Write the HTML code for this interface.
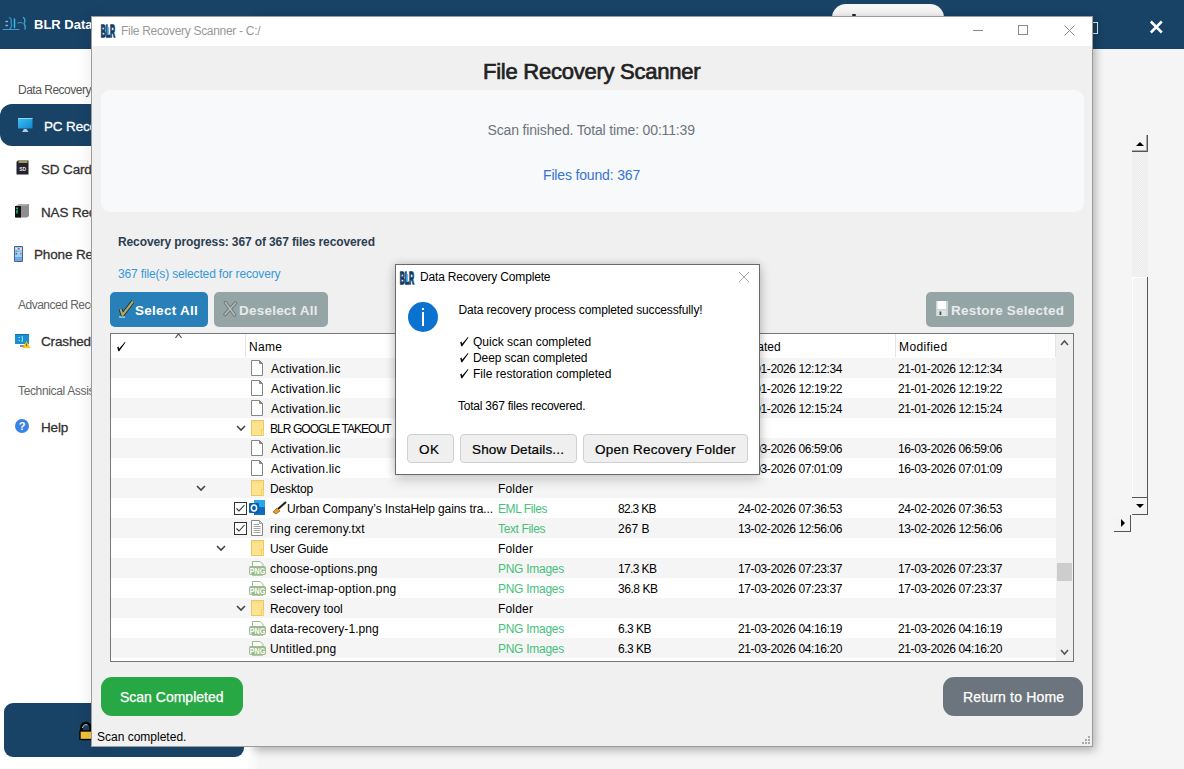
<!DOCTYPE html>
<html><head><meta charset="utf-8">
<style>
html,body{margin:0;padding:0;width:1184px;height:769px;overflow:hidden;background:#f5f5f5;font-family:"Liberation Sans",sans-serif;}
.a{position:absolute;box-sizing:border-box;}
.t{position:absolute;white-space:pre;line-height:normal;font-family:"Liberation Sans",sans-serif;}
</style></head><body>
<div class=a style='left:0;top:49px;width:252px;height:720px;background:#fff'></div>
<div class=a style='left:246px;top:49px;width:14px;height:720px;background:linear-gradient(90deg,#fff,#f5f5f5)'></div>
<div class=a style='left:0;top:0;width:1184px;height:49px;background:#184266'></div>
<div class=a style='left:832px;top:4px;width:112px;height:30px;background:linear-gradient(#f6f6f6,#ececec);border-radius:14px'></div>
<div class=a style='left:852px;top:14px;width:4px;height:2px;background:#222;border-radius:1px'></div>
<svg class=a style='left:1px;top:15px' width='26' height='16' viewBox='0 0 26 16'><g fill='none' stroke-linecap='round'><path d='M5 6.5 H6.5 M5 10.5 H6.5' stroke='#8fb0cc' stroke-width='1.4'/><path d='M8.5 2.5 Q11 4 10 7.5 Q11.5 11 9 14' stroke='#2e8fc4' stroke-width='1.4'/><path d='M13.5 4 V12.5' stroke='#44b4e4' stroke-width='1.5'/><path d='M17 8 Q19 7 21 8' stroke='#4a9ac0' stroke-width='1.2'/><path d='M22.5 2.5 Q25 5 23 8.5 Q25 11 24 14' stroke='#36a7c8' stroke-width='1.4'/><path d='M2 14.5 H18' stroke='#3f9fd0' stroke-width='1'/></g></svg>
<div class='t ' style='left:34px;top:17px;font-size:13px;color:#fff;font-weight:bold;'>BLR Data Recovery</div>
<div class=a style='left:1092px;top:22px;width:6px;height:12px;border:1.5px solid #e4ebf2;border-left:none'></div>
<svg class=a style='left:1149px;top:20px' width='15' height='14' viewBox='0 0 15 14'><path d='M1.8 1.5 L12.8 12.5 M12.8 1.5 L1.8 12.5' stroke='#fff' stroke-width='2.5'/></svg>
<div class='t ' style='left:18px;top:83px;font-size:12px;color:#555;letter-spacing:-0.490px;'>Data Recovery</div>
<div class=a style='left:0;top:104px;width:120px;height:42px;background:#184266;border-radius:0 0 0 0;border-top-left-radius:12px;border-bottom-left-radius:12px'></div>
<svg class=a style='left:17px;top:117px' width='17' height='17' viewBox='0 0 17 17'><defs><linearGradient id='mg' x1='0' y1='0' x2='1' y2='1'><stop offset='0' stop-color='#3cc4f4'/><stop offset='1' stop-color='#1186d0'/></linearGradient></defs><rect x='1' y='1' width='14.5' height='10.5' fill='url(#mg)'/><rect x='1' y='1' width='14.5' height='1' fill='#8fd3f3'/><path d='M5 15 L7 12 H9.5 L11.5 15 Z' fill='#b8c6de'/></svg>
<div class='t ' style='left:44px;top:119px;font-size:13.5px;color:#fff;letter-spacing:-0.15px;-webkit-text-stroke:0.3px #fff'>PC Recovery</div>
<svg class=a style='left:16px;top:160px' width='13' height='15' viewBox='0 0 13 15'><path d='M2 0.5 H12.5 V14.5 H0.5 V2 Z' fill='#24232e'/><rect x='2.5' y='0.5' width='9' height='2.5' fill='#9e9a62'/><text x='3.2' y='10.5' font-size='5' font-family='Liberation Sans' font-weight='bold' fill='#e8e8f0'>SD</text></svg>
<div class='t ' style='left:41px;top:162px;font-size:13.5px;color:#333;letter-spacing:-0.15px;-webkit-text-stroke:0.3px #333'>SD Card Recovery</div>
<svg class=a style='left:15px;top:204px' width='14' height='14' viewBox='0 0 14 14'><path d='M1 2 L4 0 H14 V12 L12 13.5 H1 Z' fill='#8d8d92'/><path d='M1 2 L4 0 H14 L12 1.5 Z' fill='#b0b0b4'/><rect x='0' y='2' width='6' height='11.5' fill='#101010'/><rect x='1' y='3.5' width='2' height='1.8' fill='#2fa070'/><rect x='1' y='6' width='2' height='3.5' fill='#238a5c'/></svg>
<div class='t ' style='left:41px;top:205px;font-size:13.5px;color:#333;letter-spacing:-0.15px;-webkit-text-stroke:0.3px #333'>NAS Recovery</div>
<svg class=a style='left:14px;top:246px' width='9' height='16' viewBox='0 0 9 16'><rect x='0' y='0' width='9' height='16' rx='1' fill='#43648e'/><rect x='1' y='1' width='7' height='14' fill='#a9c9ec'/><rect x='1.5' y='2' width='1.8' height='1.5' fill='#dfe9f7'/><rect x='3.8' y='2' width='1.8' height='1.5' fill='#c05a80'/><rect x='6' y='2' width='1.5' height='1.5' fill='#e6eefa'/><rect x='1.5' y='4.5' width='1.8' height='1.5' fill='#45b3a4'/><rect x='3.8' y='4.5' width='1.8' height='1.5' fill='#6fcde0'/><rect x='1.5' y='7' width='1.8' height='1.5' fill='#2a7f9f'/><rect x='3.8' y='7' width='1.8' height='1.5' fill='#9fe0f0'/><rect x='6' y='7' width='1.5' height='1.5' fill='#a07aa8'/><rect x='1' y='11' width='7' height='4' fill='#6fa8e8'/></svg>
<div class='t ' style='left:34px;top:247px;font-size:13.5px;color:#333;letter-spacing:-0.15px;-webkit-text-stroke:0.3px #333'>Phone Recovery</div>
<div class='t ' style='left:18px;top:298px;font-size:12px;color:#666;letter-spacing:-0.5px'>Advanced Recovery</div>
<svg class=a style='left:14px;top:333px' width='17' height='16' viewBox='0 0 17 16'><rect x='1' y='1' width='14' height='10' fill='#1b8fcf'/><rect x='1' y='1' width='14' height='0.8' fill='#1a6aa0'/><path d='M4.5 4.5 H6 M4.5 7.5 H6 M8 3 Q9 6 8 9' stroke='#7fe0ff' stroke-width='1.2' fill='none'/><rect x='6' y='12' width='4' height='2' fill='#8a8fa0'/><path d='M8.5 15 L12.5 8 L16.5 15 Z' fill='#f5c218'/><rect x='12' y='10.5' width='1' height='2.5' fill='#7a6a10'/></svg>
<div class='t ' style='left:41px;top:334px;font-size:13.5px;color:#333;letter-spacing:-0.15px;-webkit-text-stroke:0.3px #333'>Crashed Drive</div>
<div class='t ' style='left:18px;top:384px;font-size:12px;color:#666;letter-spacing:-0.35px'>Technical Assistance</div>
<div class=a style='left:15px;top:419px;width:14px;height:14px;border-radius:50%;background:#3b82e6;color:#fff;font:bold 11px "Liberation Sans";text-align:center;line-height:14px'>?</div>
<div class='t ' style='left:41px;top:420px;font-size:13.5px;color:#333;letter-spacing:-0.15px;-webkit-text-stroke:0.3px #333'>Help</div>
<div class=a style='left:4px;top:703px;width:240px;height:54px;background:#184266;border-radius:9px'></div>
<svg class=a style='left:79px;top:721px' width='14' height='20' viewBox='0 0 14 20'><path d='M2.5 10 V6.5 a4.5 4.5 0 0 1 9 0 V10' stroke='#000' stroke-width='2.6' fill='none'/><path d='M3.5 7 a3.5 3.5 0 0 1 5 -3' stroke='#ddd' stroke-width='0.9' fill='none'/><rect x='1' y='10' width='12.5' height='8.5' fill='#f3c23c' stroke='#000' stroke-width='1.3'/></svg>
<div class=a style='left:1132px;top:151px;width:16px;height:126px;background:repeating-conic-gradient(#f4f4f4 0 25%,#ececec 0 50%) 0 0/2px 2px'></div>
<div class=a style='left:1132px;top:135px;width:16px;height:17px;background:#f4f4f4;border-right:1px solid #555;border-bottom:1px solid #555;box-shadow:inset -1px -1px #aaa'></div>
<div class=a style='left:1136px;top:142px;width:0;height:0;border-left:4px solid transparent;border-right:4px solid transparent;border-bottom:4px solid #000'></div>
<div class=a style='left:1132px;top:277px;width:16px;height:220px;background:#f4f4f4;border-right:1px solid #555;box-shadow:inset 1px 1px #fff'></div>
<div class=a style='left:1132px;top:497px;width:16px;height:18px;background:#f4f4f4;border-top:1px solid #555;border-right:1px solid #555;border-bottom:1px solid #555'></div>
<div class=a style='left:1136px;top:504px;width:0;height:0;border-left:4px solid transparent;border-right:4px solid transparent;border-top:4px solid #000'></div>
<div class=a style='left:1114px;top:515px;width:17px;height:17px;background:#f4f4f4;border-right:1px solid #555;border-bottom:1px solid #555'></div>
<div class=a style='left:1121px;top:519px;width:0;height:0;border-top:4px solid transparent;border-bottom:4px solid transparent;border-left:4px solid #000'></div>
<div class=a style='left:252px;top:16px;width:841px;height:731px;box-shadow:2px 3px 9px rgba(0,0,0,0.3)'></div>
<div class=a style='left:91px;top:16px;width:20px;height:731px;box-shadow:-3px 0 14px rgba(0,0,0,0.07)'></div>
<div class=a style='left:91px;top:16px;width:1002px;height:731px;background:#f0f0f0;border:1px solid #9c9c9c'></div>
<div class=a style='left:92px;top:17px;width:1000px;height:29px;background:#fff'></div>
<svg class=a style='left:100px;top:23px' width='16' height='15' viewBox='0 0 16 15'><text x='0.7' y='14.2' font-family='Liberation Sans' font-size='17' font-weight='bold' fill='#0e3d6b' stroke='#0e3d6b' stroke-width='1.3' textLength='14.5' lengthAdjust='spacingAndGlyphs'>BLR</text><path d='M8.5 4 V12' stroke='#5fb8e8' stroke-width='1.2'/></svg>
<div class='t ' style='left:121px;top:24px;font-size:12px;color:#999;letter-spacing:-0.303px;'>File Recovery Scanner - C:/</div>
<div class=a style='left:973px;top:30px;width:10px;height:1px;background:#888'></div>
<div class=a style='left:1018px;top:25px;width:10px;height:10px;border:1px solid #888'></div>
<svg class=a style='left:1064px;top:25px' width='11' height='11' viewBox='0 0 11 11'><path d='M0.5 0.5 L10.5 10.5 M10.5 0.5 L0.5 10.5' stroke='#888' stroke-width='1'/></svg>
<div class='t ' style='left:483px;top:59px;font-size:22px;color:#222;letter-spacing:-0.252px;-webkit-text-stroke:0.7px #222;'>File Recovery Scanner</div>
<div class=a style='left:101px;top:90px;width:983px;height:122px;background:#f8f9fa;border-radius:9px'></div>
<div class='t ' style='left:487.5px;top:122px;font-size:14px;color:#6c757d;letter-spacing:-0.154px;'>Scan finished. Total time: 00:11:39</div>
<div class='t ' style='left:543px;top:167px;font-size:14px;color:#3574d4;letter-spacing:-0.162px;'>Files found: 367</div>
<div class='t ' style='left:118px;top:235px;font-size:12px;color:#2c3e50;font-weight:bold;letter-spacing:-0.117px;'>Recovery progress: 367 of 367 files recovered</div>
<div class='t ' style='left:118px;top:267px;font-size:12px;color:#3498db;letter-spacing:-0.153px;'>367 file(s) selected for recovery</div>
<div class=a style='left:110px;top:292px;width:98px;height:35px;background:#2980b9;border-radius:5px'></div>
<svg class=a style='left:118px;top:300px' width='16' height='18' viewBox='0 0 16 18'><path d='M2.5 9 L4.5 15 L15 1.5' stroke='#1a2a10' stroke-width='3.8' fill='none' stroke-linejoin='round'/><path d='M2.5 9 L4.5 15 L15 1.5' stroke='#a8ab78' stroke-width='2.2' fill='none' stroke-linejoin='round'/><path d='M1 17 H7' stroke='#e8f4ff' stroke-width='1'/></svg>
<div class='t ' style='left:135px;top:303px;font-size:13.5px;color:#fff;font-weight:bold;letter-spacing:0.280px;'>Select All</div>
<div class=a style='left:214px;top:292px;width:114px;height:35px;background:#95a5a6;border-radius:5px'></div>
<svg class=a style='left:223px;top:301px' width='15' height='16' viewBox='0 0 15 16'><path d='M2.5 1.5 L11.5 14 M12.5 2 L2 13.5' stroke='#6f7878' stroke-width='3.4' stroke-linecap='round' fill='none'/><path d='M2.5 1.5 L11.5 14 M12.5 2 L2 13.5' stroke='#b4bcbc' stroke-width='1.6' stroke-linecap='round' fill='none'/></svg>
<div class='t ' style='left:239px;top:303px;font-size:13.5px;color:#e6ebeb;font-weight:bold;letter-spacing:0.223px;'>Deselect All</div>
<div class=a style='left:926px;top:292px;width:148px;height:35px;background:#95a5a6;border-radius:5px'></div>
<svg class=a style='left:936px;top:301px' width='12' height='15' viewBox='0 0 12 15'><rect x='0' y='0' width='12' height='15' fill='#cfd4d4'/><rect x='1.5' y='0' width='8.5' height='8' fill='#fdfdfd'/><rect x='1.5' y='9.5' width='8.5' height='5.5' fill='#dfe3e3'/><rect x='3.5' y='10.5' width='1.8' height='3.5' fill='#4a4f4f'/></svg>
<div class='t ' style='left:951px;top:303px;font-size:13.5px;color:#e6ebeb;font-weight:bold;letter-spacing:0.229px;'>Restore Selected</div>
<div class=a style='left:110px;top:333px;width:964px;height:329px;background:#fff;border:1px solid #777'></div>
<div class=a style='left:111px;top:358px;width:945px;height:20px;background:#f5f5f5'></div>
<div class=a style='left:111px;top:398px;width:945px;height:20px;background:#f5f5f5'></div>
<div class=a style='left:111px;top:438px;width:945px;height:20px;background:#f5f5f5'></div>
<div class=a style='left:111px;top:478px;width:945px;height:20px;background:#f5f5f5'></div>
<div class=a style='left:111px;top:518px;width:945px;height:20px;background:#f5f5f5'></div>
<div class=a style='left:111px;top:558px;width:945px;height:20px;background:#f5f5f5'></div>
<div class=a style='left:111px;top:598px;width:945px;height:20px;background:#f5f5f5'></div>
<div class=a style='left:111px;top:638px;width:945px;height:20px;background:#f5f5f5'></div>
<div class=a style='left:245px;top:334px;width:1px;height:23px;background:#e5e5e5'></div>
<div class=a style='left:495px;top:334px;width:1px;height:23px;background:#e5e5e5'></div>
<div class=a style='left:615px;top:334px;width:1px;height:23px;background:#e5e5e5'></div>
<div class=a style='left:735px;top:334px;width:1px;height:23px;background:#e5e5e5'></div>
<div class=a style='left:895px;top:334px;width:1px;height:23px;background:#e5e5e5'></div>
<div class=a style='left:1055px;top:334px;width:1px;height:23px;background:#e5e5e5'></div>
<svg class=a style='left:116.5px;top:342px' width='9' height='10' viewBox='0 0 9 10'><path d='M0.2 5.2 L1.6 4.6 L2.1 6.7 L7.9 0.1 L8.5 0.6 L2.2 9.3 L1.3 9.3 Z' fill='#000'/></svg>
<svg class=a style='left:175px;top:333px' width='8' height='6' viewBox='0 0 8 6'><path d='M0.5 4.8 L3.5 1 L6.5 4.8' stroke='#555' stroke-width='1.2' fill='none'/></svg>
<div class='t ' style='left:249px;top:340px;font-size:12px;color:#000;letter-spacing:0.295px;'>Name</div>
<div class='t ' style='left:498px;top:340px;font-size:12px;color:#000;'>Type</div>
<div class='t ' style='left:618px;top:340px;font-size:12px;color:#000;'>Size</div>
<div class='t ' style='left:738px;top:340px;font-size:12px;color:#000;'>Created</div>
<div class='t ' style='left:899px;top:340px;font-size:12px;color:#000;letter-spacing:0.392px;'>Modified</div>
<div class=a style='left:1056px;top:334px;width:17px;height:327px;background:#f0f0f0'></div>
<svg class=a style='left:1060px;top:339px' width='9' height='7' viewBox='0 0 9 7'><path d='M1 6 L4.5 2 L8 6' stroke='#555' stroke-width='1.6' fill='none'/></svg>
<div class=a style='left:1057px;top:563px;width:15px;height:18px;background:#cdcdcd'></div>
<svg class=a style='left:1060px;top:649px' width='9' height='7' viewBox='0 0 9 7'><path d='M1 1 L4.5 5 L8 1' stroke='#555' stroke-width='1.6' fill='none'/></svg>
<svg class=a style='left:251px;top:360px' width='12' height='16' viewBox='0 0 12 16'><path d='M0.5 0.5 H8.5 L11.5 3.5 V15.5 H0.5 Z' fill='#fff' stroke='#858585' stroke-width='1'/><path d='M8.5 0.5 V3.5 H11.5 Z' fill='#999' stroke='#858585' stroke-width='1'/></svg>
<div class='t ' style='left:271px;top:362px;font-size:12px;color:#000;letter-spacing:0.215px;'>Activation.lic</div>
<div class='t ' style='left:738px;top:362px;font-size:12px;color:#000;letter-spacing:-0.385px;'>21-01-2026 12:12:34</div>
<div class='t ' style='left:898px;top:362px;font-size:12px;color:#000;letter-spacing:-0.385px;'>21-01-2026 12:12:34</div>
<svg class=a style='left:251px;top:380px' width='12' height='16' viewBox='0 0 12 16'><path d='M0.5 0.5 H8.5 L11.5 3.5 V15.5 H0.5 Z' fill='#fff' stroke='#858585' stroke-width='1'/><path d='M8.5 0.5 V3.5 H11.5 Z' fill='#999' stroke='#858585' stroke-width='1'/></svg>
<div class='t ' style='left:271px;top:382px;font-size:12px;color:#000;letter-spacing:0.215px;'>Activation.lic</div>
<div class='t ' style='left:738px;top:382px;font-size:12px;color:#000;letter-spacing:-0.385px;'>21-01-2026 12:19:22</div>
<div class='t ' style='left:898px;top:382px;font-size:12px;color:#000;letter-spacing:-0.385px;'>21-01-2026 12:19:22</div>
<svg class=a style='left:251px;top:400px' width='12' height='16' viewBox='0 0 12 16'><path d='M0.5 0.5 H8.5 L11.5 3.5 V15.5 H0.5 Z' fill='#fff' stroke='#858585' stroke-width='1'/><path d='M8.5 0.5 V3.5 H11.5 Z' fill='#999' stroke='#858585' stroke-width='1'/></svg>
<div class='t ' style='left:271px;top:402px;font-size:12px;color:#000;letter-spacing:0.215px;'>Activation.lic</div>
<div class='t ' style='left:738px;top:402px;font-size:12px;color:#000;letter-spacing:-0.385px;'>21-01-2026 12:15:24</div>
<div class='t ' style='left:898px;top:402px;font-size:12px;color:#000;letter-spacing:-0.385px;'>21-01-2026 12:15:24</div>
<svg class=a style='left:251px;top:420px' width='13' height='16' viewBox='0 0 13 16'><rect x='0.5' y='0.5' width='12' height='15' fill='#fde38f' stroke='#e8c766' stroke-width='1'/><rect x='1.5' y='1.5' width='10' height='1.2' fill='#fcd87a'/><rect x='10' y='9' width='3' height='7' fill='#f3cf60'/><rect x='11' y='10' width='1' height='5' fill='#fde699'/></svg>
<svg class=a style='left:236px;top:425px' width='10' height='7' viewBox='0 0 10 7'><path d='M1 1 L5 5 L9 1' stroke='#444' stroke-width='1.6' fill='none'/></svg>
<div class='t ' style='left:270px;top:422px;font-size:12px;color:#000;letter-spacing:-0.947px;'>BLR GOOGLE TAKEOUT</div>
<div class='t ' style='left:498px;top:422px;font-size:12px;color:#000;letter-spacing:0.177px;'>Folder</div>
<svg class=a style='left:251px;top:440px' width='12' height='16' viewBox='0 0 12 16'><path d='M0.5 0.5 H8.5 L11.5 3.5 V15.5 H0.5 Z' fill='#fff' stroke='#858585' stroke-width='1'/><path d='M8.5 0.5 V3.5 H11.5 Z' fill='#999' stroke='#858585' stroke-width='1'/></svg>
<div class='t ' style='left:271px;top:442px;font-size:12px;color:#000;letter-spacing:0.215px;'>Activation.lic</div>
<div class='t ' style='left:738px;top:442px;font-size:12px;color:#000;letter-spacing:-0.385px;'>16-03-2026 06:59:06</div>
<div class='t ' style='left:898px;top:442px;font-size:12px;color:#000;letter-spacing:-0.385px;'>16-03-2026 06:59:06</div>
<svg class=a style='left:251px;top:460px' width='12' height='16' viewBox='0 0 12 16'><path d='M0.5 0.5 H8.5 L11.5 3.5 V15.5 H0.5 Z' fill='#fff' stroke='#858585' stroke-width='1'/><path d='M8.5 0.5 V3.5 H11.5 Z' fill='#999' stroke='#858585' stroke-width='1'/></svg>
<div class='t ' style='left:271px;top:462px;font-size:12px;color:#000;letter-spacing:0.215px;'>Activation.lic</div>
<div class='t ' style='left:738px;top:462px;font-size:12px;color:#000;letter-spacing:-0.385px;'>16-03-2026 07:01:09</div>
<div class='t ' style='left:898px;top:462px;font-size:12px;color:#000;letter-spacing:-0.385px;'>16-03-2026 07:01:09</div>
<svg class=a style='left:251px;top:480px' width='13' height='16' viewBox='0 0 13 16'><rect x='0.5' y='0.5' width='12' height='15' fill='#fde38f' stroke='#e8c766' stroke-width='1'/><rect x='1.5' y='1.5' width='10' height='1.2' fill='#fcd87a'/><rect x='10' y='9' width='3' height='7' fill='#f3cf60'/><rect x='11' y='10' width='1' height='5' fill='#fde699'/></svg>
<svg class=a style='left:196px;top:485px' width='10' height='7' viewBox='0 0 10 7'><path d='M1 1 L5 5 L9 1' stroke='#444' stroke-width='1.6' fill='none'/></svg>
<div class='t ' style='left:270px;top:482px;font-size:12px;color:#000;letter-spacing:-0.122px;'>Desktop</div>
<div class='t ' style='left:498px;top:482px;font-size:12px;color:#000;letter-spacing:0.177px;'>Folder</div>
<svg class=a style='left:234px;top:502px' width='13' height='13' viewBox='0 0 13 13'><rect x='0.5' y='0.5' width='12' height='12' fill='#fff' stroke='#333' stroke-width='1'/><path d='M2.5 6.5 L5 9 L10.5 3' stroke='#333' stroke-width='1.1' fill='none'/></svg>
<svg class=a style='left:249px;top:500px' width='17' height='16' viewBox='0 0 17 16'><rect x='5' y='0' width='11' height='15' fill='#28a8ea'/><rect x='5' y='7' width='11' height='8' fill='#0f6cbd'/><rect x='0' y='3' width='10' height='10' rx='1' fill='#0a5ea8'/><ellipse cx='5' cy='8' rx='2.6' ry='3' fill='none' stroke='#fff' stroke-width='1.5'/></svg>
<svg class=a style='left:272px;top:501px' width='15' height='14' viewBox='0 0 15 14'><path d='M6 8 L14 1' stroke='#222' stroke-width='2.2'/><path d='M1 11 L5 7 L8 10 L4 13 Z' fill='#e59a2e' stroke='#a8641a' stroke-width='0.8'/></svg>
<div class='t ' style='left:287px;top:502px;font-size:12px;color:#000;letter-spacing:-0.084px;'>Urban Company’s InstaHelp gains tra...</div>
<div class='t ' style='left:498px;top:502px;font-size:12px;color:#46c17a;letter-spacing:-0.426px;'>EML Files</div>
<div class='t ' style='left:618px;top:502px;font-size:12px;color:#000;letter-spacing:-0.701px;'>82.3 KB</div>
<div class='t ' style='left:738px;top:502px;font-size:12px;color:#000;letter-spacing:-0.385px;'>24-02-2026 07:36:53</div>
<div class='t ' style='left:898px;top:502px;font-size:12px;color:#000;letter-spacing:-0.385px;'>24-02-2026 07:36:53</div>
<svg class=a style='left:234px;top:522px' width='13' height='13' viewBox='0 0 13 13'><rect x='0.5' y='0.5' width='12' height='12' fill='#fff' stroke='#333' stroke-width='1'/><path d='M2.5 6.5 L5 9 L10.5 3' stroke='#333' stroke-width='1.1' fill='none'/></svg>
<svg class=a style='left:251px;top:520px' width='12' height='16' viewBox='0 0 12 16'><path d='M0.5 0.5 H8.5 L11.5 3.5 V15.5 H0.5 Z' fill='#fff' stroke='#858585' stroke-width='1'/><path d='M8.5 0.5 V3.5 H11.5 Z' fill='#ccc' stroke='#999' stroke-width='0.8'/><path d='M2.5 4.5 H8 M2.5 6.5 H9.5 M2.5 8.5 H9.5 M2.5 10.5 H9.5 M2.5 12.5 H9.5' stroke='#9a9a9a' stroke-width='0.9'/></svg>
<div class='t ' style='left:270px;top:522px;font-size:12px;color:#000;letter-spacing:0.221px;'>ring ceremony.txt</div>
<div class='t ' style='left:498px;top:522px;font-size:12px;color:#46c17a;letter-spacing:-0.354px;'>Text Files</div>
<div class='t ' style='left:618px;top:522px;font-size:12px;color:#000;letter-spacing:0.035px;'>267 B</div>
<div class='t ' style='left:738px;top:522px;font-size:12px;color:#000;letter-spacing:-0.385px;'>13-02-2026 12:56:06</div>
<div class='t ' style='left:898px;top:522px;font-size:12px;color:#000;letter-spacing:-0.385px;'>13-02-2026 12:56:06</div>
<svg class=a style='left:251px;top:540px' width='13' height='16' viewBox='0 0 13 16'><rect x='0.5' y='0.5' width='12' height='15' fill='#fde38f' stroke='#e8c766' stroke-width='1'/><rect x='1.5' y='1.5' width='10' height='1.2' fill='#fcd87a'/><rect x='10' y='9' width='3' height='7' fill='#f3cf60'/><rect x='11' y='10' width='1' height='5' fill='#fde699'/></svg>
<svg class=a style='left:216px;top:545px' width='10' height='7' viewBox='0 0 10 7'><path d='M1 1 L5 5 L9 1' stroke='#444' stroke-width='1.6' fill='none'/></svg>
<div class='t ' style='left:270px;top:542px;font-size:12px;color:#000;letter-spacing:-0.278px;'>User Guide</div>
<div class='t ' style='left:498px;top:542px;font-size:12px;color:#000;letter-spacing:0.177px;'>Folder</div>
<svg class=a style='left:249px;top:561px' width='17' height='15' viewBox='0 0 17 15'><path d='M3.5 0.5 H11 L14 3.5 V6 H3.5 Z' fill='#fff' stroke='#9ab98a' stroke-width='1'/><rect x='0' y='5' width='17' height='9' rx='2' fill='#9cba8a'/><text x='0.8' y='12.8' font-family='Liberation Sans' font-size='8.5' font-weight='bold' fill='#fff' textLength='15.4' lengthAdjust='spacingAndGlyphs'>PNG</text><rect x='3' y='14' width='11' height='1' fill='#b4cca6'/></svg>
<div class='t ' style='left:270px;top:562px;font-size:12px;color:#000;letter-spacing:0.162px;'>choose-options.png</div>
<div class='t ' style='left:498px;top:562px;font-size:12px;color:#46c17a;letter-spacing:-0.278px;'>PNG Images</div>
<div class='t ' style='left:618px;top:562px;font-size:12px;color:#000;letter-spacing:-0.617px;'>17.3 KB</div>
<div class='t ' style='left:738px;top:562px;font-size:12px;color:#000;letter-spacing:-0.385px;'>17-03-2026 07:23:37</div>
<div class='t ' style='left:898px;top:562px;font-size:12px;color:#000;letter-spacing:-0.385px;'>17-03-2026 07:23:37</div>
<svg class=a style='left:249px;top:581px' width='17' height='15' viewBox='0 0 17 15'><path d='M3.5 0.5 H11 L14 3.5 V6 H3.5 Z' fill='#fff' stroke='#9ab98a' stroke-width='1'/><rect x='0' y='5' width='17' height='9' rx='2' fill='#9cba8a'/><text x='0.8' y='12.8' font-family='Liberation Sans' font-size='8.5' font-weight='bold' fill='#fff' textLength='15.4' lengthAdjust='spacingAndGlyphs'>PNG</text><rect x='3' y='14' width='11' height='1' fill='#b4cca6'/></svg>
<div class='t ' style='left:270px;top:582px;font-size:12px;color:#000;letter-spacing:0.233px;'>select-imap-option.png</div>
<div class='t ' style='left:498px;top:582px;font-size:12px;color:#46c17a;letter-spacing:-0.278px;'>PNG Images</div>
<div class='t ' style='left:618px;top:582px;font-size:12px;color:#000;letter-spacing:-0.451px;'>36.8 KB</div>
<div class='t ' style='left:738px;top:582px;font-size:12px;color:#000;letter-spacing:-0.385px;'>17-03-2026 07:23:37</div>
<div class='t ' style='left:898px;top:582px;font-size:12px;color:#000;letter-spacing:-0.385px;'>17-03-2026 07:23:37</div>
<svg class=a style='left:251px;top:600px' width='13' height='16' viewBox='0 0 13 16'><rect x='0.5' y='0.5' width='12' height='15' fill='#fde38f' stroke='#e8c766' stroke-width='1'/><rect x='1.5' y='1.5' width='10' height='1.2' fill='#fcd87a'/><rect x='10' y='9' width='3' height='7' fill='#f3cf60'/><rect x='11' y='10' width='1' height='5' fill='#fde699'/></svg>
<svg class=a style='left:236px;top:605px' width='10' height='7' viewBox='0 0 10 7'><path d='M1 1 L5 5 L9 1' stroke='#444' stroke-width='1.6' fill='none'/></svg>
<div class='t ' style='left:270px;top:602px;font-size:12px;color:#000;letter-spacing:-0.048px;'>Recovery tool</div>
<div class='t ' style='left:498px;top:602px;font-size:12px;color:#000;letter-spacing:0.177px;'>Folder</div>
<svg class=a style='left:249px;top:621px' width='17' height='15' viewBox='0 0 17 15'><path d='M3.5 0.5 H11 L14 3.5 V6 H3.5 Z' fill='#fff' stroke='#9ab98a' stroke-width='1'/><rect x='0' y='5' width='17' height='9' rx='2' fill='#9cba8a'/><text x='0.8' y='12.8' font-family='Liberation Sans' font-size='8.5' font-weight='bold' fill='#fff' textLength='15.4' lengthAdjust='spacingAndGlyphs'>PNG</text><rect x='3' y='14' width='11' height='1' fill='#b4cca6'/></svg>
<div class='t ' style='left:270px;top:622px;font-size:12px;color:#000;letter-spacing:0.073px;'>data-recovery-1.png</div>
<div class='t ' style='left:498px;top:622px;font-size:12px;color:#46c17a;letter-spacing:-0.278px;'>PNG Images</div>
<div class='t ' style='left:618px;top:622px;font-size:12px;color:#000;letter-spacing:-0.506px;'>6.3 KB</div>
<div class='t ' style='left:738px;top:622px;font-size:12px;color:#000;letter-spacing:-0.385px;'>21-03-2026 04:16:19</div>
<div class='t ' style='left:898px;top:622px;font-size:12px;color:#000;letter-spacing:-0.385px;'>21-03-2026 04:16:19</div>
<svg class=a style='left:249px;top:641px' width='17' height='15' viewBox='0 0 17 15'><path d='M3.5 0.5 H11 L14 3.5 V6 H3.5 Z' fill='#fff' stroke='#9ab98a' stroke-width='1'/><rect x='0' y='5' width='17' height='9' rx='2' fill='#9cba8a'/><text x='0.8' y='12.8' font-family='Liberation Sans' font-size='8.5' font-weight='bold' fill='#fff' textLength='15.4' lengthAdjust='spacingAndGlyphs'>PNG</text><rect x='3' y='14' width='11' height='1' fill='#b4cca6'/></svg>
<div class='t ' style='left:270px;top:642px;font-size:12px;color:#000;letter-spacing:0.205px;'>Untitled.png</div>
<div class='t ' style='left:498px;top:642px;font-size:12px;color:#46c17a;letter-spacing:-0.278px;'>PNG Images</div>
<div class='t ' style='left:618px;top:642px;font-size:12px;color:#000;letter-spacing:-0.506px;'>6.3 KB</div>
<div class='t ' style='left:738px;top:642px;font-size:12px;color:#000;letter-spacing:-0.385px;'>21-03-2026 04:16:20</div>
<div class='t ' style='left:898px;top:642px;font-size:12px;color:#000;letter-spacing:-0.385px;'>21-03-2026 04:16:20</div>
<div class=a style='left:101px;top:677px;width:142px;height:39px;background:#28a745;border-radius:11px'></div>
<div class='t ' style='left:120px;top:689px;font-size:14px;color:#fff;-webkit-text-stroke:0.25px #fff;'>Scan Completed</div>
<div class=a style='left:943px;top:677px;width:140px;height:39px;background:#6c757d;border-radius:11px'></div>
<div class='t ' style='left:963px;top:689px;font-size:14px;color:#fff;letter-spacing:0.167px;-webkit-text-stroke:0.25px #fff;'>Return to Home</div>
<div class='t ' style='left:97px;top:730px;font-size:12px;color:#000;'>Scan completed.</div>
<svg class=a style='left:1082px;top:736px' width='9' height='9' viewBox='0 0 9 9'><g fill='#aaa'><rect x='6' y='0' width='2' height='2'/><rect x='3' y='3' width='2' height='2'/><rect x='6' y='3' width='2' height='2'/><rect x='0' y='6' width='2' height='2'/><rect x='3' y='6' width='2' height='2'/><rect x='6' y='6' width='2' height='2'/></g></svg>
<div class=a style='left:395px;top:264px;width:365px;height:211px;background:#fff;border:1px solid #6a6a6a;box-shadow:0 0 8px rgba(0,0,0,0.16),0 5px 12px rgba(0,0,0,0.16)'></div>
<svg class=a style='left:399px;top:270px' width='16' height='15' viewBox='0 0 16 15'><text x='0.7' y='14.2' font-family='Liberation Sans' font-size='17' font-weight='bold' fill='#0e3d6b' stroke='#0e3d6b' stroke-width='1.3' textLength='14.5' lengthAdjust='spacingAndGlyphs'>BLR</text><path d='M8.5 4 V12' stroke='#5fb8e8' stroke-width='1.2'/></svg>
<div class='t ' style='left:420px;top:270px;font-size:12px;color:#000;letter-spacing:-0.170px;'>Data Recovery Complete</div>
<svg class=a style='left:739px;top:272px' width='10' height='10' viewBox='0 0 10 10'><path d='M0 0 L10 10 M10 0 L0 10' stroke='#aaa' stroke-width='1'/></svg>
<div class=a style='left:408px;top:302px;width:30px;height:30px;border-radius:50%;background:#0b72cf'></div>
<div class=a style='left:422px;top:308px;width:2px;height:2px;background:#fff'></div>
<div class=a style='left:422px;top:312px;width:2px;height:14px;background:#fff'></div>
<div class='t ' style='left:458.5px;top:303px;font-size:12px;color:#000;letter-spacing:-0.137px;'>Data recovery process completed successfully!</div>
<svg class=a style='left:459.5px;top:337px' width='9' height='10' viewBox='0 0 9 10'><path d='M0.2 5.2 L1.6 4.6 L2.1 6.7 L7.9 0.1 L8.5 0.6 L2.2 9.3 L1.3 9.3 Z' fill='#000'/></svg>
<div class='t ' style='left:473px;top:335px;font-size:12px;color:#000;'>Quick scan completed</div>
<svg class=a style='left:459.5px;top:353px' width='9' height='10' viewBox='0 0 9 10'><path d='M0.2 5.2 L1.6 4.6 L2.1 6.7 L7.9 0.1 L8.5 0.6 L2.2 9.3 L1.3 9.3 Z' fill='#000'/></svg>
<div class='t ' style='left:473px;top:351px;font-size:12px;color:#000;letter-spacing:-0.088px;'>Deep scan completed</div>
<svg class=a style='left:459.5px;top:369px' width='9' height='10' viewBox='0 0 9 10'><path d='M0.2 5.2 L1.6 4.6 L2.1 6.7 L7.9 0.1 L8.5 0.6 L2.2 9.3 L1.3 9.3 Z' fill='#000'/></svg>
<div class='t ' style='left:473px;top:367px;font-size:12px;color:#000;letter-spacing:0.017px;'>File restoration completed</div>
<div class='t ' style='left:458px;top:399px;font-size:12px;color:#000;letter-spacing:-0.236px;'>Total 367 files recovered.</div>
<div class=a style='left:407px;top:434px;width:47px;height:29px;background:#efefef;border:1px solid #d0d0d0;border-radius:4px'></div>
<div class='t ' style='left:419px;top:442px;font-size:13.5px;color:#000;letter-spacing:0.484px;-webkit-text-stroke:0.2px #000;'>OK</div>
<div class=a style='left:460px;top:434px;width:117px;height:29px;background:#efefef;border:1px solid #d0d0d0;border-radius:4px'></div>
<div class='t ' style='left:472px;top:442px;font-size:13.5px;color:#000;letter-spacing:0.132px;-webkit-text-stroke:0.2px #000;'>Show Details...</div>
<div class=a style='left:583px;top:434px;width:165px;height:29px;background:#efefef;border:1px solid #d0d0d0;border-radius:4px'></div>
<div class='t ' style='left:595px;top:442px;font-size:13.5px;color:#000;letter-spacing:0.247px;-webkit-text-stroke:0.2px #000;'>Open Recovery Folder</div>
</body></html>
